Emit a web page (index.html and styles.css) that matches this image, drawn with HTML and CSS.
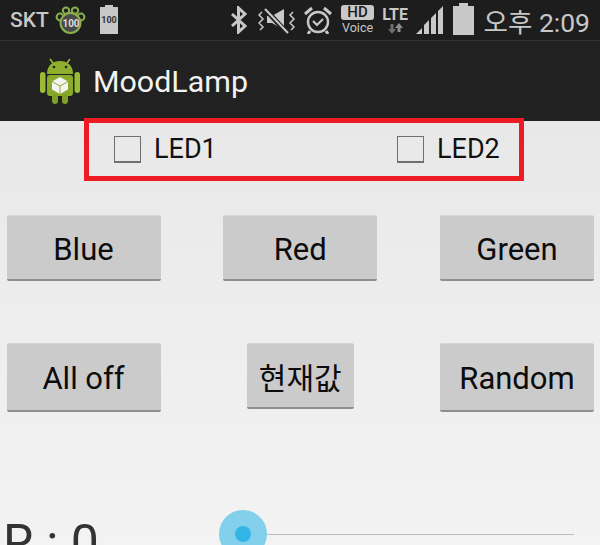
FILE: index.html
```html
<!DOCTYPE html>
<html lang="ko">
<head>
  <meta charset="UTF-8">
  <title>MoodLamp</title>
  <link rel="stylesheet" href="styles.css">
</head>
<body>
  <div class="status-bar">
    <div class="status-left">
      <span class="carrier">SKT</span>
      <span class="paw">
        <svg width="31" height="28" viewBox="0 0 31 28">
          <circle cx="5" cy="11" r="3.4" fill="#1f1f1f" stroke="#8ab04e" stroke-width="2"/>
          <circle cx="11" cy="4.6" r="3.2" fill="#1f1f1f" stroke="#8ab04e" stroke-width="2"/>
          <circle cx="20" cy="4.6" r="3.2" fill="#1f1f1f" stroke="#8ab04e" stroke-width="2"/>
          <circle cx="26" cy="11" r="3.4" fill="#1f1f1f" stroke="#8ab04e" stroke-width="2"/>
          <circle cx="15.5" cy="17" r="10" fill="#4a4a4a" stroke="#8ab04e" stroke-width="2"/>
        </svg>
        <span class="paw-num">100</span>
      </span>
      <span class="small-batt"><span class="small-batt-num">100</span></span>
    </div>
    <div class="status-right">
      <svg class="ic-bt" width="18" height="28" viewBox="0 0 18 28">
        <path d="M2 8 L15 20 L8.5 26 V2 L15 8 L2 20" fill="none" stroke="#c8c8c8" stroke-width="3"/>
      </svg>
      <svg class="ic-mute" width="39" height="28" viewBox="0 0 39 28">
        <path d="M9 10 H14 L26 3 V24 L14 17 H9 Z" fill="#c8c8c8"/>
        <path d="M7 3 L30 28" stroke="#1f1f1f" stroke-width="5"/>
        <path d="M7 3 L30 27" stroke="#c8c8c8" stroke-width="2"/>
        <path d="M4 6 L1 9 L5 13 L1 17 L5 21 L2 24 M35 6 L32 9 L36 13 L32 17 L36 21 L33 24" fill="none" stroke="#c8c8c8" stroke-width="1.5"/>
      </svg>
      <svg class="ic-alarm" width="28" height="28" viewBox="0 0 28 28">
        <circle cx="14" cy="16" r="10" fill="none" stroke="#c8c8c8" stroke-width="2.4"/>
        <path d="M9 15 L13 19 L19 13" fill="none" stroke="#c8c8c8" stroke-width="2.2"/>
        <path d="M1 8 L8 2 M27 8 L20 2 M6 25 L4 28 M22 25 L24 28" stroke="#c8c8c8" stroke-width="3"/>
      </svg>
      <span class="hd">
        <span class="hd-badge">HD</span>
        <span class="hd-voice">Voice</span>
      </span>
      <span class="lte">
        <span class="lte-text">LTE</span>
        <svg width="16" height="11" viewBox="0 0 16 11">
          <path d="M5 11 L1 6 H3.5 V1 H6.5 V6 H9 Z" fill="#6e6e6e"/>
          <path d="M12 0 L16 5 H13.5 V9 H10.5 V5 H8 Z" fill="#8c8c8c"/>
        </svg>
      </span>
      <svg class="ic-signal" width="28" height="28" viewBox="0 0 28 28">
        <path d="M0 28 L6 22 V28 Z M8 28 V19 L13 14 V28 Z M15 28 V12 L20 7 V28 Z M22 28 V5 L27 0 V28 Z" fill="#c8c8c8"/>
      </svg>
      <span class="batt"></span>
      <span class="clock">오후 2:09</span>
    </div>
  </div>

  <div class="action-bar">
    <svg class="app-icon" width="42" height="46" viewBox="0 0 42 46">
      <path d="M14 5 L11 1 M28 5 L31 1" stroke="#a4c639" stroke-width="1.4"/>
      <path d="M8 16 C8 7 14 3 21 3 C28 3 34 7 34 16 Z" fill="#8fb02c"/>
      <circle cx="15" cy="9" r="1.3" fill="#1f1f1f"/>
      <circle cx="27" cy="9" r="1.3" fill="#1f1f1f"/>
      <rect x="8" y="17" width="26" height="21" rx="3" fill="#8aab2a"/>
      <rect x="1" y="14" width="5.5" height="21" rx="2.7" fill="#9abb36"/>
      <rect x="35.5" y="14" width="5.5" height="21" rx="2.7" fill="#9abb36"/>
      <rect x="13" y="36" width="6" height="10" rx="3" fill="#7f9e28"/>
      <rect x="23" y="36" width="6" height="10" rx="3" fill="#7f9e28"/>
      <path d="M21 19 L29 23.5 V31.5 L21 36 L13 31.5 V23.5 Z" fill="#f4f4f4"/>
      <path d="M13 23.5 L21 28 L29 23.5 M21 28 V36" fill="none" stroke="#8aab2a" stroke-width="1"/>
    </svg>
    <span class="app-title">MoodLamp</span>
  </div>

  <div class="content">
    <div class="led-row">
      <label class="led"><span class="checkbox"></span><span class="led-text">LED1</span></label>
      <label class="led"><span class="checkbox"></span><span class="led-text">LED2</span></label>
    </div>

    <div class="btn-row">
      <div class="btn">Blue</div>
      <div class="btn">Red</div>
      <div class="btn">Green</div>
    </div>

    <div class="btn-row btn-row-2">
      <div class="btn btn-tall">All off</div>
      <div class="btn btn-small">현재값</div>
      <div class="btn btn-tall">Random</div>
    </div>

    <div class="slider-row">
      <span class="slider-label">R : 0</span>
      <div class="slider">
        <span class="thumb"><span class="thumb-dot"></span></span>
      </div>
    </div>
  </div>
</body>
</html>
```

FILE: styles.css
```css
html, body {
  margin: 0;
  padding: 0;
  height: 545px;
  overflow: hidden;
}

body {
  font-family: Roboto, "Noto Sans CJK KR", sans-serif;
  background: #1f1f1f;
}

/* status bar */
.status-bar {
  height: 40px;
  background: #1d1d1d;
  border-bottom: 1px solid #343434;
  display: flex;
  justify-content: space-between;
  align-items: center;
  color: #c8c8c8;
}

.status-left {
  display: flex;
  align-items: center;
  padding-left: 10px;
}

.carrier {
  font-size: 21px;
  font-weight: 500;
  width: 45px;
}

.paw {
  position: relative;
  width: 31px;
  height: 28px;
}

.paw-num {
  position: absolute;
  left: 6px;
  top: 12px;
  width: 20px;
  text-align: center;
  font-size: 10px;
  font-weight: 700;
  color: #ddd;
}

.small-batt {
  width: 18px;
  height: 27px;
  margin-left: 14px;
  background: #c8c8c8;
  display: flex;
  align-items: center;
  justify-content: center;
  position: relative;
}

.small-batt::before {
  content: "";
  position: absolute;
  top: -2px;
  left: 5px;
  width: 8px;
  height: 2px;
  background: #c8c8c8;
}

.small-batt-num {
  font-size: 9px;
  font-weight: 700;
  color: #333;
}

.status-right {
  display: flex;
  align-items: center;
  padding-right: 10px;
}

.ic-bt { margin-right: 10px; }
.ic-mute { margin-right: 7px; }
.ic-alarm { margin-right: 9px; }

.hd {
  width: 34px;
  margin-right: 7px;
  display: flex;
  flex-direction: column;
  align-items: center;
}

.hd-badge {
  width: 33px;
  height: 15px;
  line-height: 15px;
  border-radius: 3px;
  background: #c8c8c8;
  color: #1d1d1d;
  font-size: 15px;
  font-weight: 500;
  text-align: center;
}

.hd-voice {
  font-size: 12.5px;
  line-height: 15px;
}

.lte {
  width: 27px;
  margin-right: 7px;
  display: flex;
  flex-direction: column;
  align-items: center;
}

.lte-text {
  font-size: 16px;
  font-weight: 700;
  line-height: 16px;
}

.ic-signal { margin-right: 9px; }

.batt {
  width: 21px;
  height: 29px;
  margin-right: 10px;
  background: #c8c8c8;
  position: relative;
}

.batt::before {
  content: "";
  position: absolute;
  top: -3px;
  left: 6px;
  width: 9px;
  height: 3px;
  background: #c8c8c8;
}

.clock {
  font-size: 26.5px;
  white-space: nowrap;
}

/* action bar */
.action-bar {
  height: 80px;
  background: #212121;
  display: flex;
  align-items: center;
  padding-left: 39px;
}

.app-icon { margin-right: 12px; }

.app-title {
  font-size: 30.4px;
  color: #f2f2f2;
}

/* page */
.content {
  height: 424px;
  background: linear-gradient(#e8e8e8, #ececec 35%, #f3f3f3);
  padding-top: 1px;
  box-sizing: border-box;
}

.led-row {
  position: relative;
  box-sizing: border-box;
  width: 440px;
  height: 63px;
  margin: -4px 0 0 84px;
  border: 5px solid #ed1c24;
  display: flex;
  align-items: center;
  padding-left: 25px;
}

.led {
  flex: none;
  display: flex;
  align-items: center;
  font-size: 27px;
  line-height: 30px;
  color: #111;
}

.led:first-child { width: 283px; }

.led-text { padding-bottom: 2px; }

.checkbox {
  box-sizing: border-box;
  width: 27px;
  height: 27px;
  margin-right: 13px;
  border: 1px solid #6f6f6f;
  border-bottom-width: 2px;
}

.btn-row {
  display: flex;
  justify-content: space-between;
  align-items: flex-start;
  margin-top: 34px;
  padding: 0 6px 0 6.5px;
}

.btn-row-2 { margin-top: 62px; }

.btn {
  box-sizing: border-box;
  width: 154px;
  height: 66px;
  padding-top: 3px;
  background: #cbcbcb;
  border-top: 1px solid #d6d6d6;
  border-bottom: 2px solid #8e8e8e;
  border-radius: 2px;
  display: flex;
  align-items: center;
  justify-content: center;
  font-size: 31px;
  color: #0c0c0c;
}

.btn-tall { height: 69px; }

.btn-small {
  width: 107px;
  height: 66px;
  padding-top: 0;
  font-size: 30px;
}

.slider-row {
  display: flex;
  align-items: center;
  height: 48px;
  margin-top: 98px;
  padding-left: 3px;
}

.slider-label {
  flex: none;
  width: 216px;
  font-size: 50px;
  line-height: 50px;
  color: #333;
  padding-top: 18px;
}

.slider {
  position: relative;
  width: 355px;
  height: 1px;
  background: #bdbdbd;
}

.thumb {
  position: absolute;
  left: 0;
  top: -24px;
  width: 48px;
  height: 48px;
  border-radius: 50%;
  background: #82d0ec;
  display: flex;
  align-items: center;
  justify-content: center;
}

.thumb-dot {
  width: 16px;
  height: 16px;
  border-radius: 50%;
  background: #33b5e5;
}
```
